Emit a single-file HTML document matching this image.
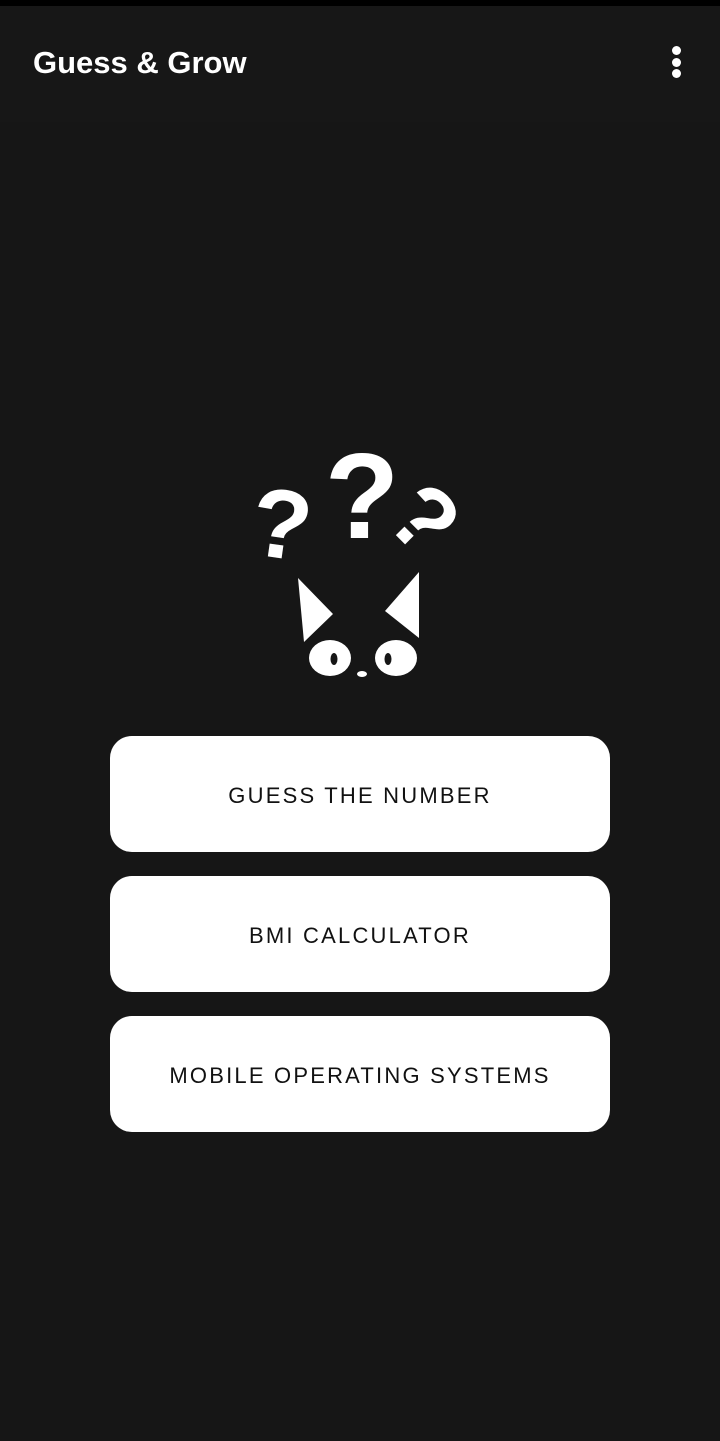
<!DOCTYPE html>
<html><head><style>
body{margin:0;width:720px;height:1441px;background:#161616;font-family:"Liberation Sans",sans-serif;overflow:hidden;position:relative}
.top{position:absolute;left:0;top:0;width:720px;height:6px;background:#000}
.bar{position:absolute;left:0;top:6px;width:720px;height:116px;background:#171717}
.title{position:absolute;left:33px;top:45px;color:#fff;font-size:31px;font-weight:bold;white-space:nowrap}
.dot{position:absolute;left:672px;width:9px;height:9px;border-radius:50%;background:#fff}
.btn{position:absolute;left:110px;width:500px;height:116px;background:#fff;border-radius:22px;display:flex;align-items:center;justify-content:center;font-size:22px;letter-spacing:2.2px;color:#111;padding-top:3px;box-sizing:border-box}
</style></head><body>
<div class="top"></div><div class="bar"></div>
<div class="title">Guess &amp; Grow</div>
<div class="dot" style="top:46px"></div><div class="dot" style="top:58px"></div><div class="dot" style="top:69px"></div>
<svg style="position:absolute;left:0;top:0" width="720" height="720">
<g fill="#fff" font-family="Liberation Sans,sans-serif" font-weight="bold">
<text x="282" y="558" font-size="98" text-anchor="middle" transform="rotate(8 282 520)">?</text>
<text x="362" y="538" font-size="122" text-anchor="middle">?</text>
<text x="428" y="552" font-size="92" text-anchor="middle" transform="rotate(45 428 515)">?</text>
<polygon points="298,578 333,614 304,642"/>
<polygon points="419,572 385,611 419,638"/>
<ellipse cx="330" cy="658" rx="21" ry="18"/>
<ellipse cx="396" cy="658" rx="21" ry="18"/>
<ellipse cx="362" cy="674" rx="5" ry="3"/>
</g>
<g fill="#161616"><ellipse cx="334" cy="659" rx="3.5" ry="6"/><ellipse cx="388" cy="659" rx="3.5" ry="6"/></g>
</svg>
<div class="btn" style="top:736px">GUESS THE NUMBER</div>
<div class="btn" style="top:876px">BMI CALCULATOR</div>
<div class="btn" style="top:1016px">MOBILE OPERATING SYSTEMS</div>
</body></html>
